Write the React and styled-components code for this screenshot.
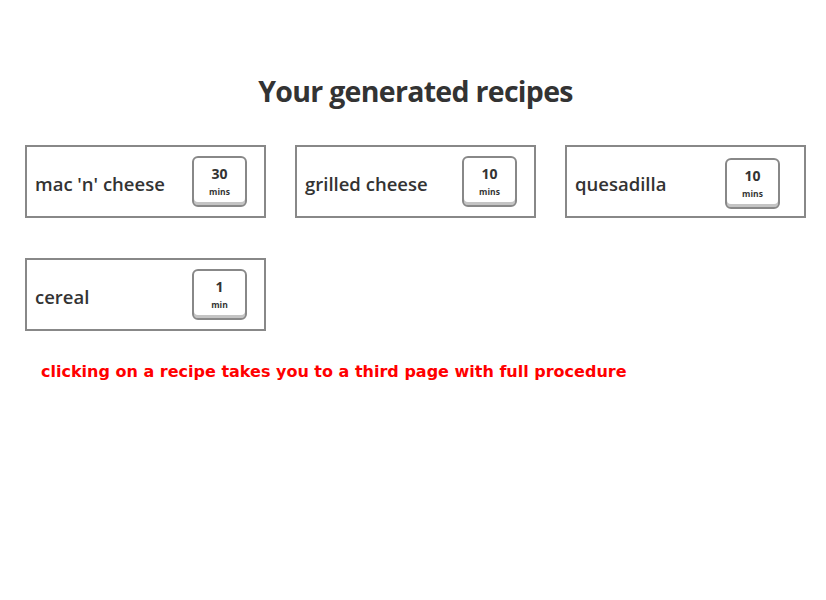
import React from "react";
import styled, { createGlobalStyle } from "styled-components";

const Global = createGlobalStyle`
  html, body { margin: 0; padding: 0; background: #fff; }
  body { font-family: "Open Sans", "Liberation Sans", sans-serif; color: #333; }
`;

const Page = styled.main`
  padding: 71px 20px 0 25px;
  width: 781px;
`;

const Title = styled.h1`
  margin: 0 0 34px;
  text-align: center;
  font-family: "Open Sans", sans-serif;
  font-weight: 700;
  font-size: 28.5px;
  line-height: 40px;
  letter-spacing: -0.7px;
  color: #333;
`;

const Grid = styled.div`
  display: grid;
  grid-template-columns: repeat(3, 241px);
  column-gap: 29px;
  row-gap: 40px;
`;

const Card = styled.div`
  box-sizing: border-box;
  height: 73px;
  border: 2px solid #888;
  display: flex;
  align-items: center;
  justify-content: space-between;
  padding: 0 ${(p) => 17 + (p.$shift || 0)}px 0 8px;
  cursor: pointer;
`;

const Name = styled.span`
  font-family: "Open Sans", sans-serif;
  font-size: 18.5px;
  font-weight: 600;
  color: #333;
  margin-top: 4px;
`;

const Badge = styled.div`
  box-sizing: border-box;
  width: 55px;
  height: 51px;
  border: 2px solid #888;
  border-radius: 6px;
  box-shadow: inset 0 -3px 0 #c4c4c4;
  display: flex;
  flex-direction: column;
  align-items: center;
  justify-content: center;
  margin-top: ${(p) => (p.$low ? 4 : 0)}px;
`;

const Num = styled.span`
  font-family: "Open Sans", sans-serif;
  font-weight: 700;
  font-size: 14px;
  line-height: 16px;
  color: #333;
`;

const Unit = styled.span`
  font-family: "Open Sans", sans-serif;
  font-weight: 700;
  font-size: 8.5px;
  line-height: 12px;
  margin-top: 4px;
  color: #333;
`;

const Note = styled.p`
  margin: 31px 0 0 16px;
  font-family: "DejaVu Sans", sans-serif;
  font-weight: 700;
  font-size: 16px;
  color: #ff0000;
`;

const recipes = [
  { name: "mac 'n' cheese", time: 30, unit: "mins" },
  { name: "grilled cheese", time: 10, unit: "mins" },
  { name: "quesadilla", time: 10, unit: "mins", shift: 7, low: true },
  { name: "cereal", time: 1, unit: "min" },
];

export default function App() {
  return (
    <>
      <Global />
      <Page>
        <Title>Your generated recipes</Title>
        <Grid>
          {recipes.map((r) => (
            <Card key={r.name} $shift={r.shift}>
              <Name>{r.name}</Name>
              <Badge $low={r.low}>
                <Num>{r.time}</Num>
                <Unit>{r.unit}</Unit>
              </Badge>
            </Card>
          ))}
        </Grid>
        <Note>clicking on a recipe takes you to a third page with full procedure</Note>
      </Page>
    </>
  );
}
